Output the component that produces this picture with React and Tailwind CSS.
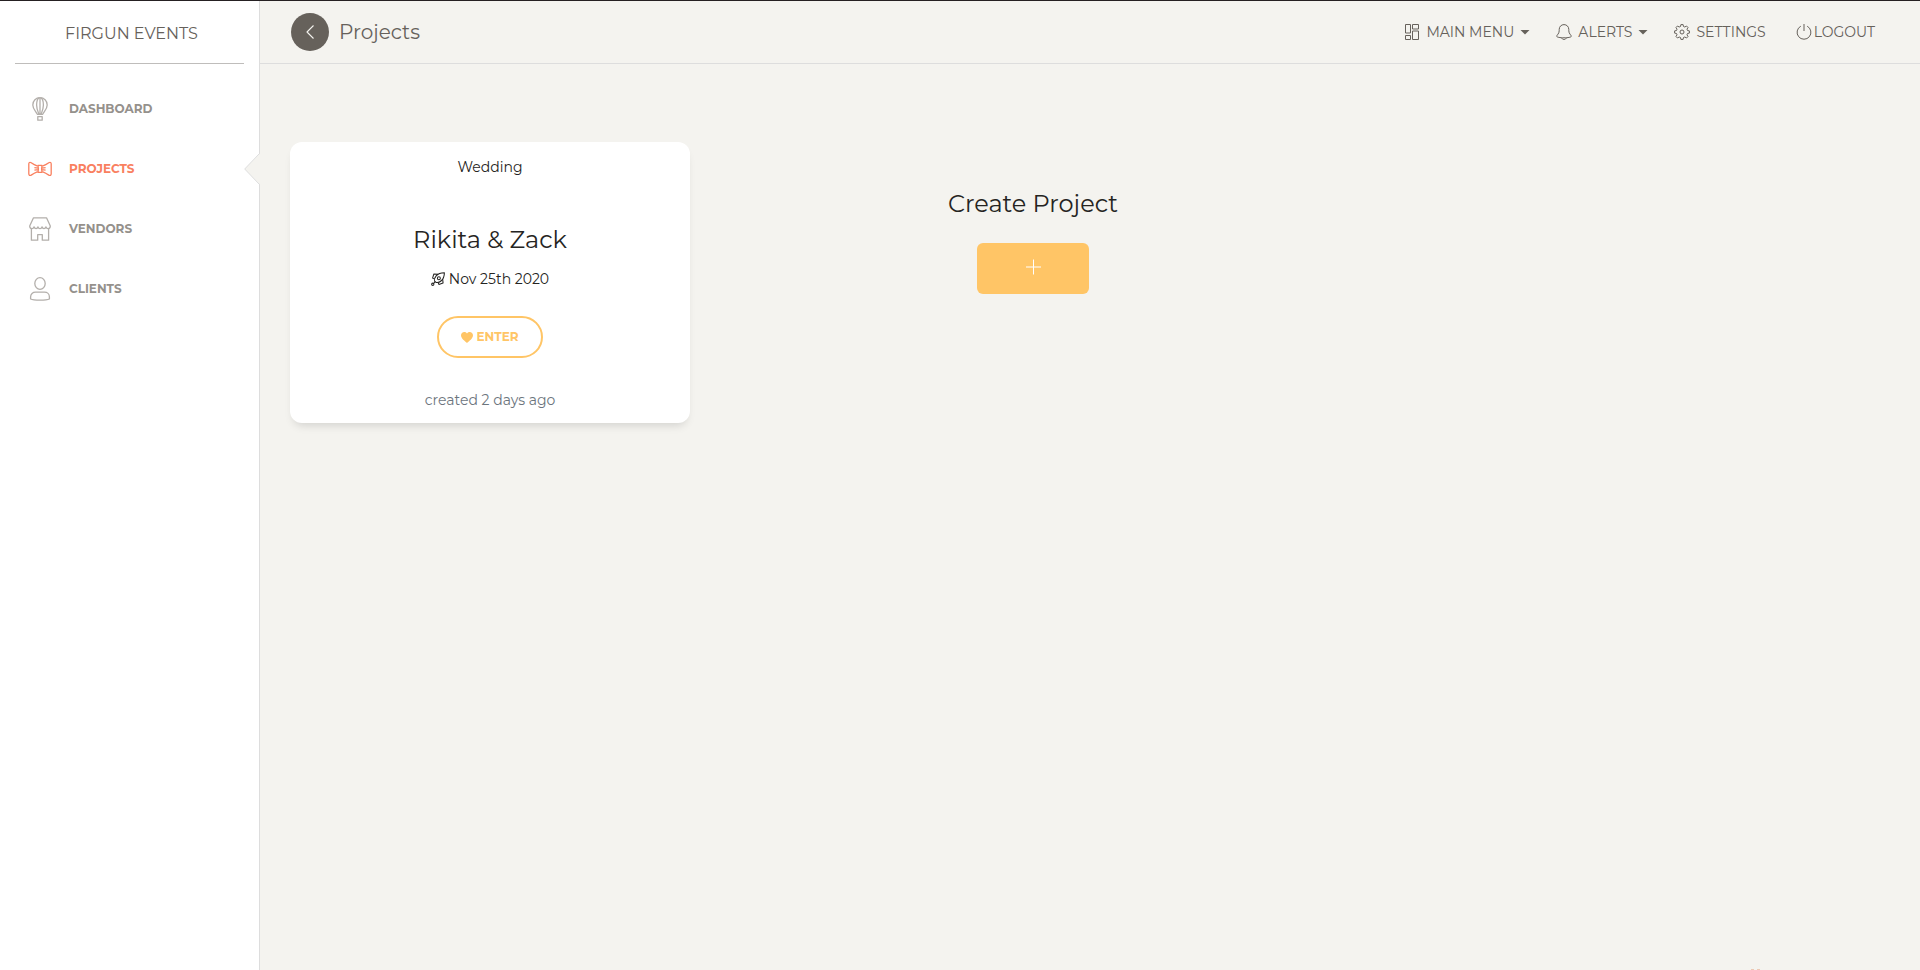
import React from "react";

function Icon({ children, className, viewBox = "0 0 24 24", width = 1.3 }) {
  return (
    <svg viewBox={viewBox} className={className} fill="none" stroke="currentColor" strokeWidth={width} strokeLinejoin="round" aria-hidden="true">
      {children}
    </svg>
  );
}

const BalloonIcon = () => (
  <Icon className="size-6">
    <path d="M9.300 17.300C7.800 14.400 4.800 11.900 4.800 8c0-4.300 3.200-7.300 7.200-7.300s7.200 3 7.200 7.300c0 3.900-3 6.400-4.500 9.300z" />
    <path d="M10.800 17C9.300 13.500 8.600 11 8.600 8c0-3.500 1.200-6.200 2.400-7.200M13.200 17c1.500-3.500 2.200-6 2.200-9 0-3.500-1.200-6.200-2.400-7.200M12 1v16" />
    <path d="M9.800 19.600h4.400v3.600H9.800z" />
  </Icon>
);

const BowIcon = () => (
  <Icon className="size-6">
    <path d="M9.700 9.200C7.200 8.200 4.600 6.700 3.200 5.700 1.800 4.900.8 5.500.8 7v9.800c0 1.500 1 2.100 2.400 1.300 1.400-1 4-2.500 6.500-3.500M14.300 9.200c2.500-1 5.100-2.500 6.500-3.500 1.400-.8 2.400-.2 2.400 1.300v9.800c0 1.500-1 2.100-2.400 1.300-1.400-1-4-2.500-6.500-3.500" />
    <path d="M10 8.400h4c-.5 2.300-.5 4.700 0 7h-4c.5-2.300.5-4.700 0-7zM6.400 10.600l3.800.5M6.400 13.200l3.800-.5M17.600 10.600l-3.800.5M17.600 13.200l-3.800-.5" />
  </Icon>
);

const StoreIcon = () => (
  <Icon className="size-6">
    <path d="M5.500.8h13L22.300 9c0 3.200-3.600 3.400-4.300.8-.8 2.400-3.300 2.400-4 0-.6 2.400-3.400 2.400-4 0-.7 2.400-3.200 2.400-4 0C5.300 12.400 1.700 12.200 1.700 9z" />
    <path d="M3.400 11.800v11.400h6.300v-5.500h4.600v5.500h6.300V11.800" />
  </Icon>
);

const PersonIcon = () => (
  <Icon className="size-6">
    <ellipse cx="12" cy="6.500" rx="5.200" ry="5.800" />
    <path d="M2.600 22v-2.100c0-2.800 2.200-4.700 4.900-4.700h9c2.700 0 4.900 1.900 4.900 4.700V22c-3.200 1.600-15.600 1.600-18.800 0z" />
  </Icon>
);

const GridIcon = () => (
  <Icon className="size-4" viewBox="0 0 16 16" width="1">
    <path d="M1.500.5h5v8.500h-5zM8.500.5h6V5h-6zM1.500 11.500h5v4h-5zM8.500 7h6v8.500h-6z" />
  </Icon>
);

const BellIcon = () => (
  <Icon className="size-4" viewBox="0 0 16 16" width="1">
    <path d="M12.800 6.800V5.500C12.800 2.600 10.700.6 8 .6S3.200 2.600 3.200 5.500v1.300c0 3.200-2.500 4-2.500 5.500C.7 13.200 4 13.800 8 13.800s7.300-.6 7.300-1.500c0-1.500-2.500-2.300-2.500-5.500zM5.800 13.900c.2 2.100 4.200 2.100 4.400 0" />
  </Icon>
);

const GearIcon = () => (
  <Icon className="size-4" viewBox="0 0 16 16" width="1">
    <circle cx="8" cy="8" r="2" />
    <path d="M6.900.6h2.200l.4 1.900 1.300.5 1.700-1 1.500 1.500-1 1.700.5 1.300 1.900.4v2.200l-1.900.4-.5 1.300 1 1.700-1.500 1.500-1.700-1-1.300.5-.4 1.900H6.900l-.4-1.900-1.300-.5-1.700 1L2 12.500l1-1.700-.5-1.300-1.900-.4V6.900l1.900-.4L3 5.200 2 3.500 3.500 2l1.700 1 1.300-.5z" />
  </Icon>
);

const PowerIcon = () => (
  <Icon className="size-4" viewBox="0 0 16 16" width="1">
    <path d="M8 0v7M4.800 2.200a6.900 6.900 0 1 0 6.400 0" />
  </Icon>
);

const RocketIcon = () => (
  <Icon className="size-3.5" viewBox="0 0 16 16" width="1.200">
    <path d="M15.300.8c-4 0-7.300 1.200-9.400 3.600C4.300 6.200 3.700 8.600 4.100 10.300l1.700 1.600c1.800.4 4.100-.2 5.900-1.900 2.400-2.200 3.600-5.200 3.600-9.200z" />
    <circle cx="9" cy="7.200" r="1.700" />
    <path d="M8 2.700 3.300 2.200 1.800 7l2.400.9M13.300 8l.5 4.700-4.800 1.500-.9-2.400M4.700 11.200l-2 2" />
    <circle cx="2" cy="14" r="1.300" />
  </Icon>
);

const Caret = () => (
  <svg viewBox="0 0 10 5" className="h-[5px] w-2.5" fill="currentColor" aria-hidden="true">
    <path d="M.5 0h9L5 4.600z" />
  </svg>
);

const links = [
  { label: "DASHBOARD", icon: BalloonIcon },
  { label: "PROJECTS", icon: BowIcon, active: true },
  { label: "VENDORS", icon: StoreIcon },
  { label: "CLIENTS", icon: PersonIcon },
];

function Sidebar() {
  return (
    <aside className="w-[260px] shrink-0 border-r border-[#dddddd] bg-white">
      <div className="mx-[15px] flex h-[63px] items-center justify-center border-b border-[#bfbdbb] pt-1 pl-1 text-base text-[#66615b]">
        <a href="#home">FIRGUN EVENTS</a>
      </div>
      <nav className="mt-[15px]">
        {links.map(({ label, icon: Glyph, active }) => (
          <a
            key={label}
            href={"#" + label.toLowerCase()}
            aria-current={active ? "page" : undefined}
            className={
              active
                ? "relative flex h-15 items-center pl-7 text-[#f9805f]"
                : "relative flex h-15 items-center pl-7 text-[#b3afab]"
            }
          >
            <Glyph />
            <span className={active ? "ml-[17px] text-xs font-bold" : "ml-[17px] text-xs font-bold text-[#95918c]"}>{label}</span>
            {active && (
              <svg viewBox="0 0 16 32" className="absolute -right-px h-8 w-4" aria-hidden="true">
                <path d="M16 .5.700 16 16 31.500z" fill="#f4f3ef" />
                <path d="M15.500.5.700 16l14.800 15.500" fill="none" stroke="#dddddd" />
              </svg>
            )}
          </a>
        ))}
      </nav>
    </aside>
  );
}

function Header() {
  return (
    <header className="flex h-[63px] items-center justify-between border-b border-[#dddddd] pr-[45px] pl-[31px] text-[#66615b]">
      <div className="flex items-center gap-2.5">
        <button aria-label="Back" className="flex size-[38px] items-center justify-center rounded-full bg-[#66615b] text-[#f4f3ef]">
          <Icon className="size-4" viewBox="0 0 16 16" width="1.1">
            <path d="M11.500 1.500 5 8l6.500 6.500" />
          </Icon>
        </button>
        <h1 className="text-xl">Projects</h1>
      </div>
      <nav className="flex items-center text-sm">
        <button className="mr-[26px] flex items-center gap-1.5">
          <GridIcon />
          <span>MAIN MENU</span>
          <Caret />
        </button>
        <button className="mr-[26px] flex items-center gap-1.5">
          <BellIcon />
          <span>ALERTS</span>
          <Caret />
        </button>
        <a href="#settings" className="mr-[30px] flex items-center gap-1.5">
          <GearIcon />
          <span>SETTINGS</span>
        </a>
        <a href="#logout" className="flex items-center gap-0.5">
          <PowerIcon />
          <span>LOGOUT</span>
        </a>
      </nav>
    </header>
  );
}

function ProjectCard() {
  return (
    <article className="flex w-[400px] flex-col items-center rounded-xl bg-white pt-3.5 pb-3 text-sm shadow-[0_6px_10px_-4px_rgba(0,0,0,0.15)]">
      <p className="leading-[22px]">Wedding</p>
      <h2 className="mt-11 text-2xl leading-9">Rikita &amp; Zack</h2>
      <p className="mt-2.5 flex items-center gap-1 leading-[22px]">
        <RocketIcon />
        Nov 25th 2020
      </p>
      <button className="mt-[26px] flex h-[42px] w-[106px] items-center justify-center gap-[3px] rounded-full border-2 border-[#ffc566] text-xs font-bold text-[#ffc566]">
        <svg viewBox="0 0 12 11" className="h-[11px] w-3" fill="currentColor" aria-hidden="true">
          <path d="M6 11C4 9.300 0 6.500 0 3.300 0 .2 4-1.200 6 1.600 8-1.200 12 .2 12 3.300 12 6.500 8 9.300 6 11z" />
        </svg>
        ENTER
      </button>
      <p className="mt-[31px] leading-[22px] text-[#6c757d]">created 2 days ago</p>
    </article>
  );
}

export default function App() {
  return (
    <div className="flex min-h-screen border-t border-[#252022] bg-[#f4f3ef] font-['Montserrat','Inter',sans-serif] text-[#252422]">
      <Sidebar />
      <div className="min-w-0 flex-1">
        <Header />
        <main className="flex items-start px-[30px] pt-[78px]">
          <ProjectCard />
          <section className="flex max-w-[686px] flex-1 flex-col items-center pt-11">
            <h2 className="text-2xl leading-9">Create Project</h2>
            <button aria-label="Create project" className="mt-[21px] flex h-[51px] w-28 items-center justify-center rounded-md bg-[#ffc566] pb-1 text-white">
              <Icon className="size-4" viewBox="0 0 16 16" width="1">
                <path d="M8.500.5v15M1 8h15" />
              </Icon>
            </button>
          </section>
        </main>
      </div>
      <svg viewBox="0 0 10 1" className="fixed right-[159px] bottom-0 h-px w-2.5" fill="#edc8b4" aria-hidden="true">
        <path d="M0 0h3v1H0zM6 0h3v1H6z" />
      </svg>
    </div>
  );
}
